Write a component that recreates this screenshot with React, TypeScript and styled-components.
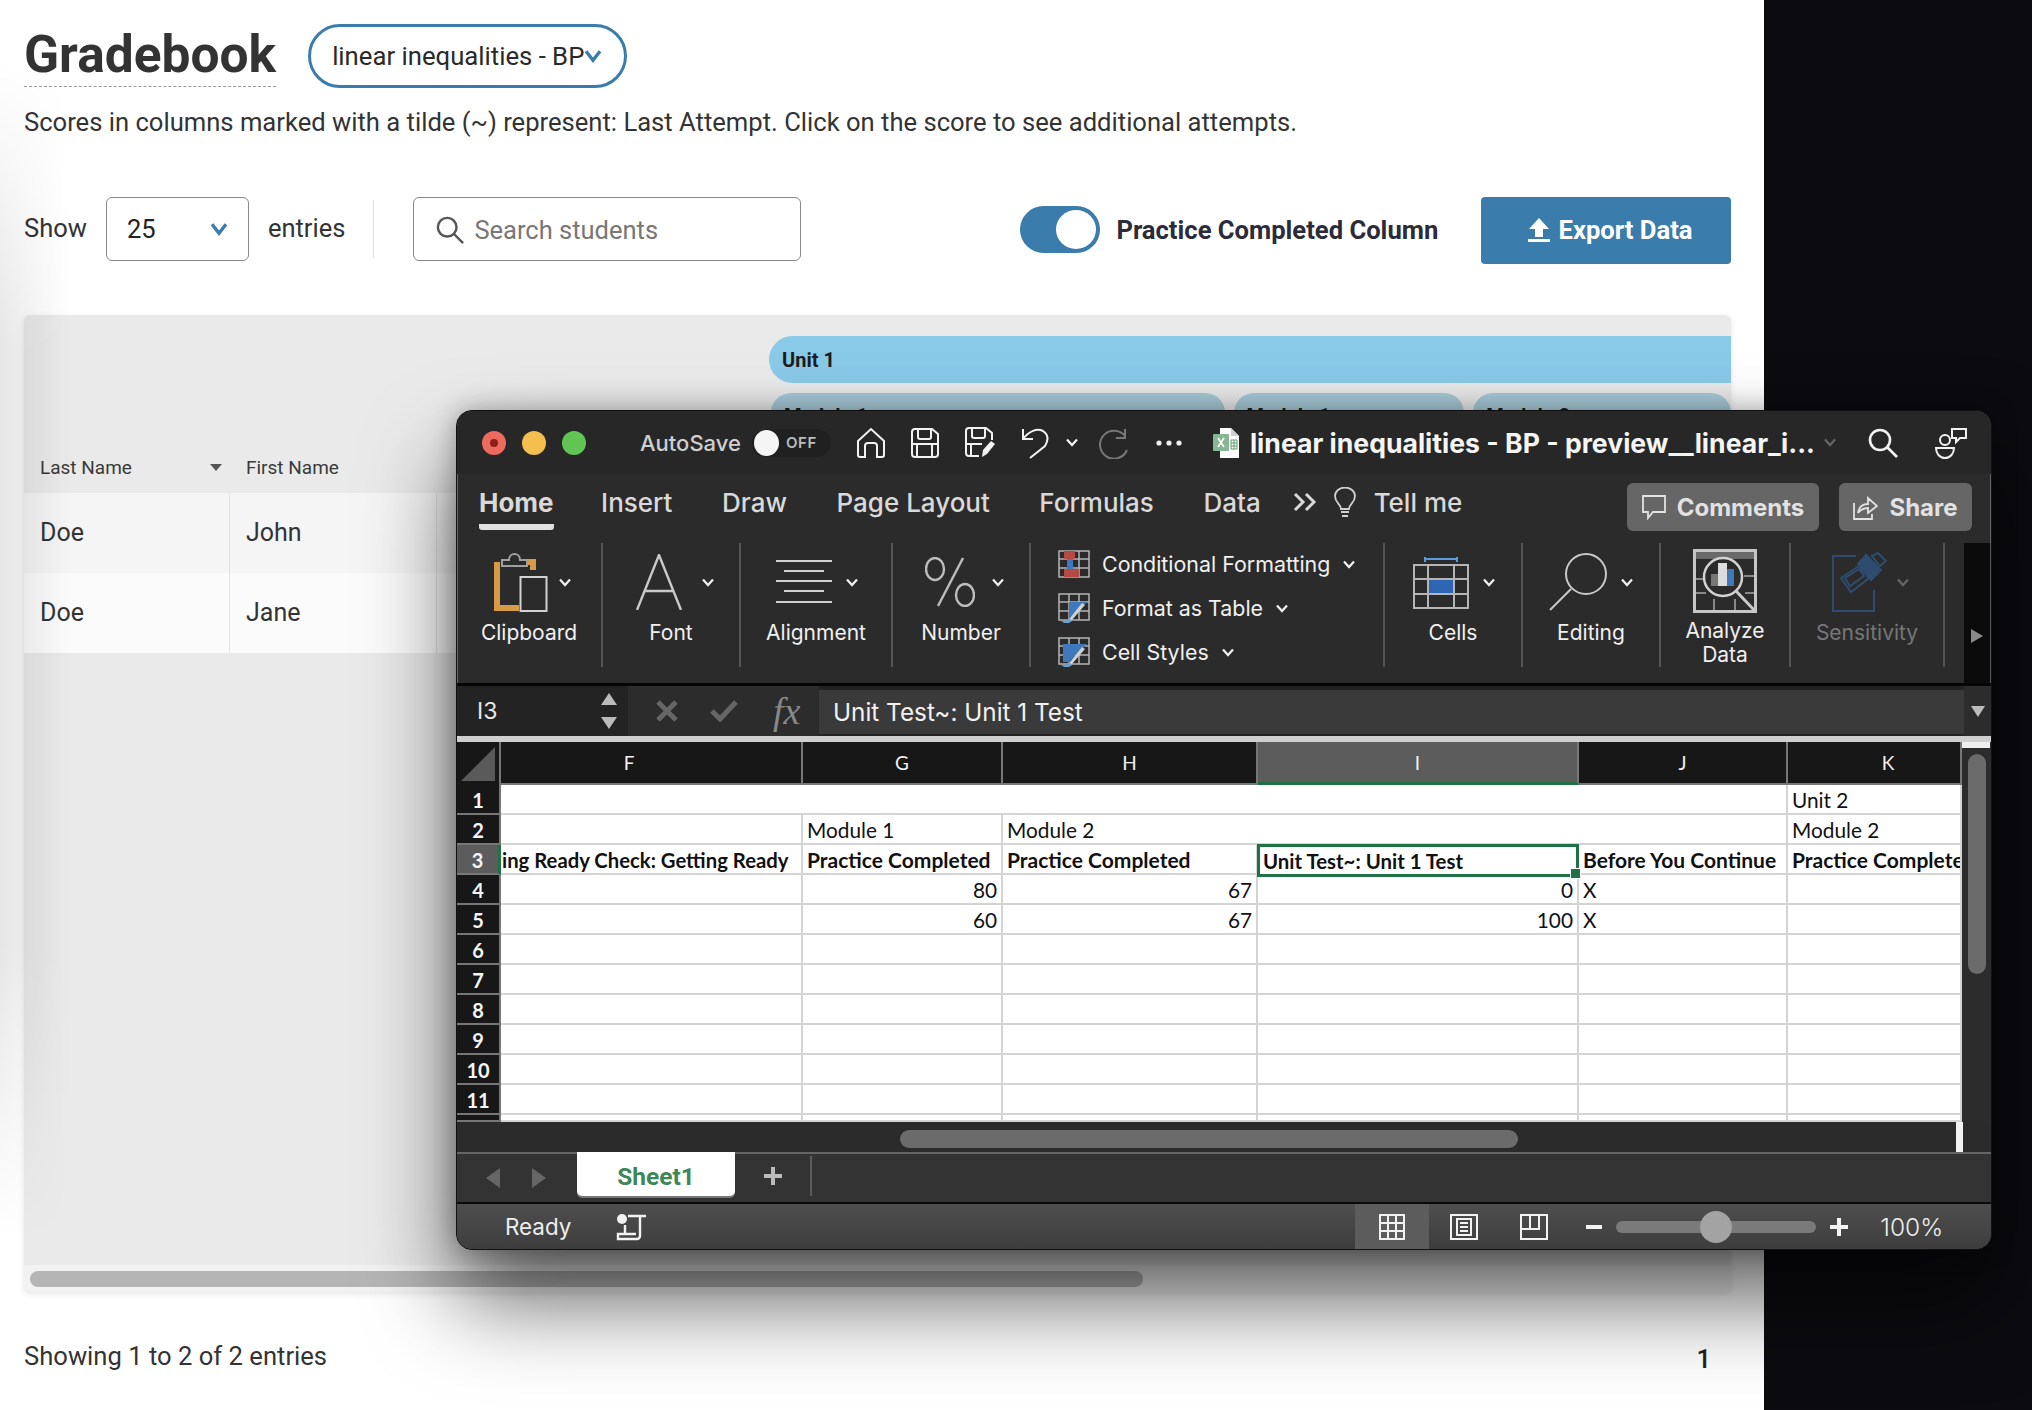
import React from 'react'
import styled, { createGlobalStyle } from 'styled-components'

const GlobalStyle = createGlobalStyle`
  html, body { margin: 0; padding: 0; background: #0c0c10; overflow: hidden; }
  * { box-sizing: border-box; }
`

const Screen = styled.div`
  position: relative;
  width: 2032px;
  height: 1410px;
  display: flex;
  overflow: hidden;
  font-family: Roboto, "Liberation Sans", sans-serif;
`

const Page = styled.div`
  position: relative;
  width: 1764px;
  height: 1410px;
  background: #fff;
  padding: 24px 33px 0 24px;
  display: flex;
  flex-direction: column;
  color: #333;
`

const EdgeShade = styled.div`
  position: absolute;
  left: 0;
  top: 60px;
  width: 70px;
  height: 1180px;
  background: linear-gradient(90deg, rgba(0, 0, 0, 0.1), rgba(0, 0, 0, 0));
  -webkit-mask-image: linear-gradient(180deg, transparent, #000 25%, #000 75%, transparent);
  pointer-events: none;
`

const HeaderRow = styled.div`
  display: flex;
  align-items: flex-start;
  gap: 32px;
`

const Title = styled.h1`
  margin: 0;
  height: 63px;
  padding-top: 3px;
  font-size: 51.5px;
  line-height: 56px;
  font-weight: 700;
  color: #333;
  border-bottom: 1.5px dashed #999;
`

const AssessmentSelect = styled.div`
  width: 319px;
  height: 64px;
  border: 3px solid #3a7cab;
  border-radius: 32px;
  display: flex;
  align-items: center;
  padding-left: 21px;
  font-size: 25.7px;
  color: #2a2a2a;
  white-space: nowrap;
`

const Description = styled.p`
  margin: 17px 0 0;
  font-size: 25.6px;
  line-height: 34px;
  color: #333;
  white-space: nowrap;
`

const Toolbar = styled.div`
  display: flex;
  align-items: center;
  height: 67px;
  padding-bottom: 6px;
  margin-top: 58px;
  font-size: 25.5px;
`

const PageSelect = styled.div`
  width: 143px;
  height: 64px;
  align-self: flex-start;
  margin: 0 19px 0 19px;
  border: 1.5px solid #8a8a8a;
  border-radius: 6px;
  display: flex;
  align-items: center;
  justify-content: space-between;
  padding: 0 20px;
  font-size: 25.5px;
  color: #222;
`

const ToolbarDivider = styled.div`
  width: 1px;
  height: 58px;
  margin: 2px 39px 0 28px;
  background: #ddd;
`

const SearchBox = styled.div`
  width: 388px;
  height: 64px;
  align-self: flex-start;
  border: 1.5px solid #8a8a8a;
  border-radius: 6px;
  display: flex;
  align-items: center;
  gap: 10px;
  padding: 1px 0 0 22px;
  font-size: 25.5px;
  color: #777;
`

const ToggleTrack = styled.div`
  width: 80px;
  height: 47px;
  margin: 4px 0 0 219px;
  border-radius: 24px;
  background: #3a7cab;
  display: flex;
  align-items: center;
  justify-content: flex-end;
  padding-right: 4px;
`

const ToggleKnob = styled.div`
  width: 40px;
  height: 39px;
  border-radius: 50%;
  background: #fff;
`

const ToggleLabel = styled.span`
  margin: 4px 0 0 16px;
  font-size: 25.6px;
  font-weight: 700;
  color: #2b2b3a;
  white-space: nowrap;
`

const ExportButton = styled.div`
  width: 250px;
  height: 67px;
  align-self: flex-start;
  margin-left: auto;
  background: #3a7cab;
  border-radius: 4px;
  display: flex;
  align-items: center;
  justify-content: center;
  gap: 8px;
  padding: 0 0 2px 7px;
  color: #fff;
  font-size: 25.6px;
  font-weight: 700;
`

const Table = styled.div`
  width: 1707px;
  height: 977px;
  margin-top: 51px;
  background: #eaeaea;
  border-radius: 6px;
  box-shadow: 0 2px 6px rgba(0, 0, 0, 0.1);
  display: flex;
  flex-direction: column;
`

const TableHead = styled.div`
  height: 178px;
  padding-top: 21px;
  display: flex;
  flex-direction: column;
  font-size: 19px;
`

const UnitBar = styled.div`
  height: 49px;
  margin-left: 745px;
  padding-left: 13px;
  display: flex;
  align-items: center;
  border-radius: 24px 0 0 24px;
  background: #89cae8;
  font-weight: 700;
  font-size: 20px;
  color: #1d1d1d;
`

const ModuleRow = styled.div`
  display: flex;
  gap: 9px;
  margin: 10px 0 0 747px;
`

const ModuleBar = styled.div<{ $w: number }>`
  width: ${p => p.$w}px;
  height: 50px;
  padding: 11px 0 0 13px;
  border-radius: 20px 20px 0 0;
  background: #a8cad8;
  font-weight: 700;
  font-size: 20px;
  color: #1d1d1d;
`

const HeadLabels = styled.div`
  display: flex;
  margin-top: auto;
  height: 52px;
  color: #3a3a3a;
`

const NameCell = styled.div<{ $w: number }>`
  width: ${p => p.$w}px;
  display: flex;
  align-items: center;
  justify-content: space-between;
  padding: 0 8px 2px 16px;
`

const SortCaret = styled.span`
  width: 0;
  height: 0;
  border-left: 6px solid transparent;
  border-right: 6px solid transparent;
  border-top: 7px solid #555;
`

const StudentRow = styled.div<{ $shade: string }>`
  height: 80px;
  display: flex;
  background: ${p => p.$shade};
  font-size: 25px;
  color: #333;
`

const StudentCell = styled.div<{ $w: number }>`
  width: ${p => p.$w}px;
  display: flex;
  align-items: center;
  padding: 0 0 2px 16px;
  border-right: 1px solid #e2e2e2;
`

const TableScroll = styled.div`
  margin-top: auto;
  height: 27px;
  padding: 6px 0 0 6px;
  background: #f2f2f2;
  border-radius: 0 0 6px 6px;
`

const TableThumb = styled.div`
  width: 1113px;
  height: 16px;
  border-radius: 8px;
  background: #b5b5b5;
`

const Footer = styled.div`
  display: flex;
  justify-content: space-between;
  align-items: center;
  width: 1707px;
  margin-top: 46px;
  font-size: 25.6px;
  color: #333;
`

const PageNumber = styled.span`
  margin-right: 20px;
  padding-top: 6px;
  font-weight: 500;
  color: #222;
`

/* excel window */

const Window = styled.div`
  position: absolute;
  left: 456px;
  top: 410px;
  width: 1536px;
  height: 840px;
  border-radius: 16px;
  border: 1px solid #111;
  box-shadow: inset 0 1px 0 #666, inset 1px 0 0 #666, inset -1px 0 0 #666, inset 0 -2px 0 #666,
    0 50px 90px rgba(0, 0, 0, 0.62), 0 0 26px rgba(0, 0, 0, 0.3);
  background: #2b2b2b;
  display: flex;
  flex-direction: column;
  overflow: hidden;
  font-family: Inter, Roboto, sans-serif;
  color: #ddd;
`

const TitleBar = styled.div`
  height: 63px;
  flex: none;
  display: flex;
  align-items: center;
  background: #272727;
  padding-left: 25px;
`

const Light = styled.div<{ $c: string; $ml: number }>`
  width: 24px;
  height: 24px;
  margin-left: ${p => p.$ml}px;
  border-radius: 50%;
  background: ${p => p.$c};
  display: flex;
  align-items: center;
  justify-content: center;
`

const LightDot = styled.div`
  width: 8px;
  height: 8px;
  border-radius: 50%;
  background: #8c1d18;
`

const AutoSave = styled.span`
  margin-left: 54px;
  font-size: 22px;
  font-weight: 500;
  color: #cfcfcf;
`

const OffSwitch = styled.div`
  width: 79px;
  height: 28px;
  margin-left: 11px;
  border-radius: 14px;
  background: #202020;
  display: flex;
  align-items: center;
  gap: 7px;
  padding-left: 2px;
  font-size: 15px;
  font-weight: 600;
  letter-spacing: 0.6px;
  color: #bbb;
`

const OffKnob = styled.div`
  width: 25px;
  height: 26px;
  border-radius: 50%;
  background: #f5f5f5;
`

const BarIcon = styled.div<{ $ml: number }>`
  display: flex;
  margin-left: ${p => p.$ml}px;
`

const DocTitle = styled.span`
  margin-left: 11px;
  width: 565px;
  font-size: 26.6px;
  font-weight: 700;
  color: #f5f5f5;
  white-space: nowrap;
`

const TabRow = styled.div`
  height: 69px;
  flex: none;
  position: relative;
  display: flex;
  align-items: flex-start;
  padding: 10px 0 0 22px;
`

const Tabs = styled.div`
  display: flex;
  gap: 49.5px;
  font-size: 26px;
  font-weight: 500;
  color: #d9d9d9;
`

const TabLabel = styled.div<{ $on?: boolean }>`
  height: 46px;
  padding-top: 3px;
  margin-right: ${p => (p.$on ? -2 : 0)}px;
  font-weight: ${p => (p.$on ? 700 : 500)};
  border-bottom: ${p => (p.$on ? '6px solid #e0e0e0' : 'none')};
  border-radius: 3px;
  white-space: nowrap;
`

const MoreTabs = styled.div`
  display: flex;
  align-items: center;
  height: 36px;
  margin-left: 32px;
`

const TellMe = styled.span`
  margin-left: 18px;
  padding-top: 3px;
  font-size: 26px;
  font-weight: 500;
  color: #d9d9d9;
`

const TabActions = styled.div`
  margin-left: auto;
  margin-right: 19px;
  margin-top: -1px;
  display: flex;
  gap: 20px;
`

const ActionButton = styled.div<{ $w: number }>`
  width: ${p => p.$w}px;
  height: 48px;
  background: #666;
  border-radius: 6px;
  display: flex;
  align-items: center;
  justify-content: center;
  gap: 11px;
  font-size: 24px;
  font-weight: 700;
  color: #e2e2e2;
`

const Ribbon = styled.div`
  height: 140px;
  flex: none;
  display: flex;
  padding-bottom: 16px;
  position: relative;
`

const RibbonGroup = styled.div<{ $w: number; $dim?: boolean }>`
  width: ${p => p.$w}px;
  height: 124px;
  flex: none;
  border-right: 2px solid #555;
  display: flex;
  flex-direction: column;
  align-items: center;
  color: ${p => (p.$dim ? '#777' : '#f0f0f0')};
  font-size: 21px;
  line-height: 24px;
  text-align: center;
`

const RibbonIcons = styled.div<{ $left: number; $gap?: number }>`
  height: 78px;
  align-self: flex-start;
  display: flex;
  align-items: center;
  gap: ${p => p.$gap || 0}px;
  padding-left: ${p => p.$left}px;
`

const StyleList = styled.div`
  width: 354px;
  height: 124px;
  padding: 7px 0 0 27px;
  border-right: 2px solid #555;
  display: flex;
  flex-direction: column;
  gap: 16px;
  font-size: 21.4px;
  color: #f0f0f0;
`

const StyleItem = styled.div`
  height: 28px;
  display: flex;
  align-items: center;
  white-space: nowrap;
`

const StyleText = styled.span`
  margin: 0 13px 0 12px;
`

const RibbonEnd = styled.div`
  position: absolute;
  right: 0;
  top: 0;
  width: 27px;
  height: 140px;
  background: #0b0b0b;
  display: flex;
  align-items: center;
  justify-content: center;
  padding: 45px 0 0 0;
  border-right: 1px solid #555;
`

const FormulaBar = styled.div`
  height: 59px;
  flex: none;
  display: flex;
  border-top: 3px solid #050505;
  background: #232323;
  border-bottom: 6px solid #cfcfcf;
`

const NameBox = styled.div`
  width: 168px;
  display: flex;
  align-items: center;
  justify-content: space-between;
  padding: 0 8px 0 20px;
  background: #232323;
  font-size: 23px;
  color: #e8e8e8;
`

const Steppers = styled.div`
  display: flex;
  flex-direction: column;
  gap: 12px;
`

const FormulaTools = styled.div`
  width: 191px;
  margin-left: 3px;
  background: #2c2c2c;
  display: flex;
  align-items: center;
  gap: 32px;
  padding-left: 28px;
`

const FxLabel = styled.span`
  margin-left: 3px;
  font-family: "Liberation Serif", serif;
  font-style: italic;
  font-size: 38px;
  line-height: 40px;
  color: #888;
`

const FormulaInput = styled.div`
  width: 1145px;
  margin: 4px 0 2px;
  padding-left: 14px;
  background: #3a3a3a;
  display: flex;
  align-items: center;
  font-size: 24.3px;
  color: #f2f2f2;
`

const FormulaEnd = styled.div`
  flex: 1;
  background: #2c2c2c;
  display: flex;
  align-items: center;
  justify-content: center;
`

const SheetArea = styled.div`
  height: 380px;
  flex: none;
  display: flex;
`

const Sheet = styled.div`
  width: 1505px;
  height: 380px;
  flex: none;
  display: grid;
  grid-template-columns: 44px 302px 200px 255px 321px 209px 174px;
  grid-template-rows: 43px repeat(11, 30px) 7px;
  background: #fff;
  overflow: hidden;
  font-family: Lato, "Open Sans", sans-serif;
  font-size: 20.8px;
  color: #111;
`

const Corner = styled.div`
  background: #171717;
  border-right: 2px solid #777;
  display: flex;
  align-items: flex-end;
  justify-content: flex-end;
  padding: 0 4px 4px 0;
`

const ColHead = styled.div<{ $on?: boolean; $nudge?: number }>`
  background: ${p => (p.$on ? '#5c5c5c' : '#171717')};
  border-right: 2px solid #777;
  border-bottom: ${p => (p.$on ? '3px solid #1f7246' : '2px solid #777')};
  color: #f2f2f2;
  display: flex;
  align-items: center;
  justify-content: center;
  font-size: 19px;
  padding-left: ${p => Math.max(p.$nudge || 0, 0)}px;
  padding-right: ${p => Math.max(-(p.$nudge || 0), 0)}px;
`

const RowHead = styled.div<{ $on?: boolean }>`
  background: ${p => (p.$on ? '#5c5c5c' : '#171717')};
  border-bottom: 2px solid #777;
  border-right: ${p => (p.$on ? '3px solid #1f7246' : '2px solid #777')};
  color: #f5f5f5;
  display: flex;
  align-items: center;
  justify-content: center;
  padding-top: 1px;
  font-size: 20px;
  font-weight: 700;
`

const Cell = styled.div<{ $span?: number; $bold?: boolean; $right?: boolean }>`
  grid-column: span ${p => p.$span || 1};
  border-right: 2px solid #d4d4d4;
  border-bottom: 2px solid #d4d4d4;
  display: flex;
  align-items: center;
  justify-content: ${p => (p.$right ? 'flex-end' : 'flex-start')};
  padding: 1px 4px 0;
  font-size: ${p => (p.$bold ? 21 : 20.8)}px;
  font-weight: ${p => (p.$bold ? 700 : 400)};
  white-space: nowrap;
  overflow: hidden;
`

const ClippedCell = styled(Cell)`
  padding-left: 1px;
  font-size: 20.3px;
`

const ActiveCell = styled.div`
  position: relative;
  z-index: 1;
  border: 3px solid #1f7246;
  margin: -1px 0 -2px -1px;
  display: flex;
  align-items: center;
  padding: 0 3px;
  font-size: 20.4px;
  font-weight: 700;
  white-space: nowrap;

  &::after {
    content: '';
    position: absolute;
    right: -5px;
    bottom: -5px;
    width: 9px;
    height: 9px;
    background: #1f7246;
    border: 1px solid #fff;
  }
`

const VScroll = styled.div`
  flex: 1;
  background: #2c2c2c;
  padding: 12px 5px 0 6px;
  position: relative;

  &::before {
    content: '';
    position: absolute;
    left: 0;
    right: 1px;
    top: 0;
    height: 6px;
    background: #eee;
  }
`

const VThumb = styled.div`
  width: 18px;
  height: 220px;
  border-radius: 9px;
  background: #6b6b6b;
`

const HScroll = styled.div`
  height: 30px;
  flex: none;
  display: flex;
  background: #2b2b2b;
  padding: 8px 0 0 443px;
`

const HThumb = styled.div`
  width: 618px;
  height: 18px;
  border-radius: 9px;
  background: #6b6b6b;
`

const HScrollEnd = styled.div`
  width: 7px;
  height: 30px;
  margin: -8px 0 0 438px;
  background: #f2f2f2;
`

const SheetTabs = styled.div`
  height: 52px;
  flex: none;
  display: flex;
  align-items: flex-start;
  background: #333;
  border-top: 2px solid #666;
  border-bottom: 2px solid #0a0a0a;
`

const SheetArrows = styled.div`
  width: 120px;
  height: 48px;
  display: flex;
  align-items: center;
  gap: 32px;
  padding-left: 29px;
`

const SheetTab = styled.div`
  width: 158px;
  height: 44px;
  margin-top: -2px;
  padding-top: 4px;
  background: #fff;
  border-radius: 0 0 5px 5px;
  box-shadow: 0 2px 0 #777;
  display: flex;
  align-items: center;
  justify-content: center;
  color: #3f8757;
  font-family: Roboto, sans-serif;
  font-size: 24.5px;
  font-weight: 700;
`

const AddSheet = styled.div`
  width: 77px;
  height: 40px;
  margin-top: 2px;
  border-right: 2px solid #5c5c5c;
  display: flex;
  align-items: center;
  justify-content: center;
`

const StatusBar = styled.div`
  flex: 1;
  display: flex;
  align-items: center;
  background: linear-gradient(180deg, #4e4e4e, #3d3d3d);
  padding-left: 48px;
  font-size: 22.4px;
  color: #eee;
`

const ViewButton = styled.div<{ $w: number; $on?: boolean; $ml?: number }>`
  width: ${p => p.$w}px;
  height: 100%;
  margin-left: ${p => p.$ml || 0}px;
  display: flex;
  align-items: center;
  justify-content: center;
  background: ${p => (p.$on ? '#5c5c5c' : 'transparent')};
`

const ZoomTrack = styled.div`
  position: relative;
  width: 200px;
  height: 12px;
  margin: 0 14px;
  border-radius: 6px;
  background: #7a7a7a;
`

const ZoomKnob = styled.div`
  position: absolute;
  left: 84px;
  top: -10px;
  width: 32px;
  height: 32px;
  border-radius: 50%;
  background: #a3a3a3;
`

const ZoomValue = styled.span`
  margin-left: 32px;
  font-size: 24.5px;
  font-weight: 300;
`

const ChevronBlue = ({ size = 18 }: { size?: number }) => (
  <svg width={size} height={size * 0.8} viewBox="0 0 18 14" fill="none" stroke="#3a7cab" strokeWidth="3.4">
    <path d="M2 2l7 9 7-9" />
  </svg>
)

const Chevron = ({ c = '#f0f0f0' }: { c?: string }) => (
  <svg width="12" height="9" viewBox="0 0 12 9" fill="none" stroke={c} strokeWidth="2.2" style={{ flex: 'none' }}>
    <path d="M1 1.5l5 5.5 5-5.5" />
  </svg>
)

const Stroke = styled.svg`
  display: block;
  flex: none;
`

const HomeIcon = () => (
  <Stroke width="30" height="32" viewBox="0 0 30 32" fill="none" stroke="#f2f2f2" strokeWidth="2">
    <path d="M2 14L15 2l13 12v14a2 2 0 0 1-2 2h-5V19a3 3 0 0 0-3-3h-6a3 3 0 0 0-3 3v11H4a2 2 0 0 1-2-2z" />
  </Stroke>
)

const SaveIcon = () => (
  <Stroke width="29" height="30" viewBox="0 0 29 30" fill="none" stroke="#f2f2f2" strokeWidth="2">
    <path d="M5 1h17l6 5v20a3 3 0 0 1-3 3H5a3 3 0 0 1-3-3V4a3 3 0 0 1 3-3z" />
    <path d="M8 1v8a2 2 0 0 0 2 2h9a2 2 0 0 0 2-2V1M2 16h26M7 16v13M22 16v13" />
  </Stroke>
)

const SaveEditIcon = () => (
  <Stroke width="32" height="32" viewBox="0 0 32 32" fill="none" stroke="#f2f2f2" strokeWidth="2">
    <path d="M15 29H5a3 3 0 0 1-3-3V4a3 3 0 0 1 3-3h17l6 5v7" />
    <path d="M8 1v8a2 2 0 0 0 2 2h9a2 2 0 0 0 2-2V1M2 17h16M7 17v12" />
    <path d="M18 30l1-7 8-9 4 3-8 10z" fill="#f2f2f2" stroke="none" />
  </Stroke>
)

const UndoIcon = () => (
  <Stroke width="30" height="32" viewBox="0 0 30 32" fill="none" stroke="#f2f2f2" strokeWidth="2">
    <path d="M2 2v10h10M2 12C8 4 16 1 22 4c6 4 5 10 2 15L9 31" />
  </Stroke>
)

const RedoIcon = () => (
  <Stroke width="34" height="32" viewBox="0 0 34 32" fill="none" stroke="#777" strokeWidth="2">
    <path d="M28 2v9h-9M28 9A14 14 0 1 0 30 23" />
  </Stroke>
)

const DotsIcon = () => (
  <Stroke width="26" height="6" viewBox="0 0 26 6" fill="#eee">
    <circle cx="3" cy="3" r="2.6" />
    <circle cx="13" cy="3" r="2.6" />
    <circle cx="23" cy="3" r="2.6" />
  </Stroke>
)

const ExcelFileIcon = () => (
  <Stroke width="26" height="30" viewBox="0 0 26 30">
    <path d="M7 0h11l8 8v22H7z" fill="#fff" />
    <path d="M18 0l8 8h-8z" fill="#cfcfcf" />
    <rect x="0" y="6" width="16" height="17" rx="1" fill="#86b793" />
    <path d="M5 10l6 9M11 10l-6 9" stroke="#fff" strokeWidth="1.6" />
    <path d="M18 12h6v9h-6zM21 12v9M18 15h6M18 18h6" fill="none" stroke="#5f9a70" strokeWidth="1" />
  </Stroke>
)

const SearchGlass = ({ c = '#f2f2f2', s = 30 }: { c?: string; s?: number }) => (
  <Stroke width={s} height={s} viewBox="0 0 30 30" fill="none" stroke={c} strokeWidth="2.6">
    <circle cx="12" cy="12" r="10" />
    <path d="M19 19l10 10" />
  </Stroke>
)

const CollabIcon = () => (
  <Stroke width="33" height="32" viewBox="0 0 33 32" fill="none" stroke="#f2f2f2" strokeWidth="2">
    <circle cx="10" cy="13" r="5" />
    <path d="M1 21h18c0 6-4 10-9 10s-9-4-9-10z" />
    <path d="M17 2h14v9h-6l-4 4v-4h-4z" />
  </Stroke>
)

const BulbIcon = () => (
  <Stroke width="22" height="30" viewBox="0 0 22 30" fill="none" stroke="#cfcfcf" strokeWidth="1.8">
    <path d="M7 22c0-5-6-6-6-13a10 8.500 0 0 1 20 0c0 7-6 8-6 13z" />
    <path d="M7 25h8M8 29h6" />
  </Stroke>
)

const CommentIcon = () => (
  <Stroke width="24" height="25" viewBox="0 0 24 25" fill="none" stroke="#e2e2e2" strokeWidth="1.8">
    <path d="M1 1h22v16H11l-5 6v-6H1z" />
  </Stroke>
)

const ShareIcon = () => (
  <Stroke width="25" height="26" viewBox="0 0 25 26" fill="none" stroke="#e2e2e2" strokeWidth="1.8">
    <path d="M1 9v16h18v-5M5 19c1-6 5-9 10-9V4l9 8-9 7v-5c-4 0-7 1-10 5z" />
  </Stroke>
)

const ClipboardIcon = () => (
  <Stroke width="54" height="60" viewBox="0 0 54 60" fill="none">
    <path d="M3 10v46h22M34 10h5v8" stroke="#d79a45" strokeWidth="6" />
    <path d="M8 14V8h7c0-8 11-8 11 0h7v6z" stroke="#a0a0a0" strokeWidth="2" fill="#2b2b2b" />
    <rect x="26.500" y="25" width="26" height="34" stroke="#d2d2d2" strokeWidth="2" fill="#2b2b2b" />
  </Stroke>
)

const FontIcon = () => (
  <Stroke width="46" height="56" viewBox="0 0 46 56" fill="none" stroke="#c9c9c9" strokeWidth="2.4">
    <path d="M1 56L23 1l22 55M9 37h28" />
  </Stroke>
)

const AlignIcon = () => (
  <Stroke width="56" height="44" viewBox="0 0 56 44" stroke="#d0d0d0" strokeWidth="2">
    <path d="M0 1h56M8 11h40M0 21h56M8 31h40M0 42h56" />
  </Stroke>
)

const PercentIcon = () => (
  <Stroke width="50" height="50" viewBox="0 0 50 50" fill="none" stroke="#bdbdbd" strokeWidth="2.4">
    <ellipse cx="10" cy="12" rx="9" ry="11" />
    <ellipse cx="40" cy="38" rx="9" ry="11" />
    <path d="M38 1L13 49" />
  </Stroke>
)

const CondFormatIcon = () => (
  <Stroke width="32" height="28" viewBox="0 0 32 28" fill="none">
    <path d="M1 1h30v26H1zM11 1v26M21 1v26M1 9h30M1 18h30" stroke="#b5b5b5" strokeWidth="1.5" />
    <rect x="6" y="1" width="11" height="8" fill="#b54a44" />
    <rect x="6" y="19" width="15" height="8" fill="#b54a44" />
    <rect x="9" y="9" width="6" height="10" fill="#3f78bd" />
  </Stroke>
)

const TableFormatIcon = ({ full }: { full?: boolean }) => (
  <Stroke width="32" height="30" viewBox="0 0 32 30" fill="none">
    <path d="M1 1h30v26H1zM11 1v26M21 1v26M1 9h30M1 18h30" stroke="#b5b5b5" strokeWidth="1.5" />
    <path d={full ? 'M5 7h24L11 25H5z' : 'M11 9h18L12 27h-1z'} fill="#3f78bd" />
    <path d="M4 28c3 1 7 0 8-3l12-15 3 2-13 15c-3 3-8 3-10 1z" fill="#d0d0d0" />
    <path d="M3 28c3 1 6 0 8-3l3 3c-3 3-8 3-11 0z" fill="#64a3dc" />
  </Stroke>
)

const CellsIcon = () => (
  <Stroke width="56" height="54" viewBox="0 0 56 54" fill="none">
    <path d="M12 2v5M44 2v5M12 4h32" stroke="#5a9bdc" strokeWidth="2" />
    <rect x="15" y="24" width="26" height="15" fill="#2f66b3" />
    <path d="M1 10h54v43H1zM15 10v43M41 10v43M1 24h54M1 39h54" stroke="#b5b5b5" strokeWidth="2" />
  </Stroke>
)

const EditIcon = () => (
  <Stroke width="58" height="58" viewBox="0 0 58 58" fill="none" stroke="#c9c9c9" strokeWidth="2">
    <circle cx="37" cy="21" r="20" />
    <path d="M22 36L1 57" />
  </Stroke>
)

const AnalyzeIcon = () => (
  <Stroke width="64" height="64" viewBox="0 0 64 64" fill="none">
    <rect x="1.500" y="1.500" width="61" height="61" stroke="#c6c6c6" strokeWidth="3" />
    <rect x="3" y="3" width="58" height="7" fill="#6a6a6a" />
    <path d="M3 30h10M51 27h10M3 44h10M52 44h9M21 50v11M42 50v11" stroke="#888" strokeWidth="2" />
    <circle cx="30" cy="28" r="19" stroke="#d2d2d2" strokeWidth="2.500" fill="#2b2b2b" />
    <rect x="18" y="25" width="7" height="12" fill="#777" />
    <rect x="25" y="14" width="9" height="23" fill="#dcdcdc" />
    <rect x="34" y="20" width="7" height="17" fill="#3f78bd" />
    <path d="M43 42l19 20" stroke="#c9c9c9" strokeWidth="3" />
  </Stroke>
)

const SensitivityIcon = () => (
  <Stroke width="56" height="60" viewBox="0 0 56 60" fill="none" stroke="#2f4c6e" strokeWidth="2">
    <path d="M24 4H1v55h41V38" />
    <path d="M9 26L27 14l10 12-18 14z" fill="#2b2b2b" />
    <path d="M13 26l14-9 5 7-14 10z" />
    <path d="M26 12l8-9 15 15-10 10z" fill="#2f4c6e" />
    <path d="M40 4l6-3 8 8-6 5z" />
  </Stroke>
)

const Triangle = styled.div<{ $dir: 'up' | 'down' | 'left' | 'right'; $c: string; $s: number; $l?: number }>`
  width: 0;
  height: 0;
  flex: none;
  border-style: solid;
  border-color: transparent;
  border-width: ${p => p.$s}px;
  ${p => (p.$dir === 'up' ? `border-top-width:0;border-bottom-width:${p.$l}px;border-bottom-color:${p.$c};` : '')}
  ${p => (p.$dir === 'down' ? `border-bottom-width:0;border-top-width:${p.$l}px;border-top-color:${p.$c};` : '')}
  ${p => (p.$dir === 'left' ? `border-left-width:0;border-right-width:${p.$l}px;border-right-color:${p.$c};` : '')}
  ${p => (p.$dir === 'right' ? `border-right-width:0;border-left-width:${p.$l}px;border-left-color:${p.$c};` : '')}
`

const Cross = () => (
  <Stroke width="22" height="22" viewBox="0 0 22 22" stroke="#666" strokeWidth="5">
    <path d="M2 2l18 18M20 2L2 20" />
  </Stroke>
)

const Check = () => (
  <Stroke width="28" height="22" viewBox="0 0 28 22" fill="none" stroke="#666" strokeWidth="5">
    <path d="M2 11l8 8L26 2" />
  </Stroke>
)

const MacroIcon = () => (
  <Stroke width="31" height="28" viewBox="0 0 31 28" fill="none" stroke="#f2f2f2" strokeWidth="2.4">
    <circle cx="6" cy="6" r="5" fill="#f2f2f2" stroke="none" />
    <path d="M12 3h18M24 3v20a3 3 0 0 1-3 3H2v-5h18M9 12v9" />
  </Stroke>
)

const NormalViewIcon = () => (
  <Stroke width="26" height="26" viewBox="0 0 26 26" fill="none" stroke="#f2f2f2" strokeWidth="2">
    <path d="M1 1h24v24H1zM9 1v24M17 1v24M1 9h24M1 17h24" />
  </Stroke>
)

const PageViewIcon = () => (
  <Stroke width="28" height="26" viewBox="0 0 28 26" fill="none" stroke="#f2f2f2" strokeWidth="2">
    <path d="M1 1h26v24H1zM7 5h14v16H7zM10 9h8M10 13h8M10 17h8" />
  </Stroke>
)

const BreakViewIcon = () => (
  <Stroke width="28" height="26" viewBox="0 0 28 26" fill="none" stroke="#f2f2f2" strokeWidth="2">
    <path d="M1 1h26v24H1zM1 15h18V1M10 1v14" />
  </Stroke>
)

const Plus = ({ c = '#f2f2f2' }: { c?: string }) => (
  <Stroke width="18" height="18" viewBox="0 0 18 18" stroke={c} strokeWidth="4">
    <path d="M9 0v18M0 9h18" />
  </Stroke>
)

const Minus = () => (
  <Stroke width="16" height="4" viewBox="0 0 16 4" stroke="#f2f2f2" strokeWidth="4">
    <path d="M0 2h16" />
  </Stroke>
)

const columns = ['F', 'G', 'H', 'I', 'J', 'K']
const columnNudge: Record<string, number> = { F: -44, K: 28 }
const emptyRows = [6, 7, 8, 9, 10, 11]

export default function App() {
  return (
    <Screen>
      <GlobalStyle />
      <Page>
        <EdgeShade />
        <HeaderRow>
          <Title>Gradebook</Title>
          <AssessmentSelect>
            linear inequalities - BP
            <ChevronBlue />
          </AssessmentSelect>
        </HeaderRow>
        <Description>
          Scores in columns marked with a tilde (~) represent: Last Attempt. Click on the score to see additional attempts.
        </Description>
        <Toolbar>
          Show
          <PageSelect>
            25
            <ChevronBlue />
          </PageSelect>
          entries
          <ToolbarDivider />
          <SearchBox>
            <SearchGlass c="#555" s={28} />
            Search students
          </SearchBox>
          <ToggleTrack>
            <ToggleKnob />
          </ToggleTrack>
          <ToggleLabel>Practice Completed Column</ToggleLabel>
          <ExportButton>
            <svg width="24" height="26" viewBox="0 0 24 26" fill="#fff">
              <path d="M12 1l10 11h-6v8H8v-8H2zM1 22h22v3H1z" />
            </svg>
            Export Data
          </ExportButton>
        </Toolbar>
        <Table>
          <TableHead>
            <UnitBar>Unit 1</UnitBar>
            <ModuleRow>
              <ModuleBar $w={454}>Module 1</ModuleBar>
              <ModuleBar $w={231}>Module 1</ModuleBar>
              <ModuleBar $w={258}>Module 2</ModuleBar>
            </ModuleRow>
            <HeadLabels>
              <NameCell $w={206}>
                Last Name
                <SortCaret />
              </NameCell>
              <NameCell $w={207}>First Name</NameCell>
            </HeadLabels>
          </TableHead>
          <StudentRow $shade="#f5f5f5">
            <StudentCell $w={206}>Doe</StudentCell>
            <StudentCell $w={207}>John</StudentCell>
          </StudentRow>
          <StudentRow $shade="#fbfbfb">
            <StudentCell $w={206}>Doe</StudentCell>
            <StudentCell $w={207}>Jane</StudentCell>
          </StudentRow>
          <TableScroll>
            <TableThumb />
          </TableScroll>
        </Table>
        <Footer>
          Showing 1 to 2 of 2 entries
          <PageNumber>1</PageNumber>
        </Footer>
      </Page>

      <Window>
        <TitleBar>
          <Light $c="#ed6a5e" $ml={0}>
            <LightDot />
          </Light>
          <Light $c="#f4bf4f" $ml={16} />
          <Light $c="#61c554" $ml={16} />
          <AutoSave>AutoSave</AutoSave>
          <OffSwitch>
            <OffKnob />
            OFF
          </OffSwitch>
          <BarIcon $ml={25}><HomeIcon /></BarIcon>
          <BarIcon $ml={24}><SaveIcon /></BarIcon>
          <BarIcon $ml={25}><SaveEditIcon /></BarIcon>
          <BarIcon $ml={25}><UndoIcon /></BarIcon>
          <BarIcon $ml={15}><Chevron /></BarIcon>
          <BarIcon $ml={19}><RedoIcon /></BarIcon>
          <BarIcon $ml={25}><DotsIcon /></BarIcon>
          <BarIcon $ml={31}><ExcelFileIcon /></BarIcon>
          <DocTitle>linear inequalities - BP - preview__linear_i...</DocTitle>
          <BarIcon $ml={9}><Chevron c="#666" /></BarIcon>
          <BarIcon $ml={32}><SearchGlass /></BarIcon>
          <BarIcon $ml={37}><CollabIcon /></BarIcon>
        </TitleBar>
        <TabRow>
          <Tabs>
            <TabLabel $on>Home</TabLabel>
            <TabLabel>Insert</TabLabel>
            <TabLabel>Draw</TabLabel>
            <TabLabel>Page Layout</TabLabel>
            <TabLabel>Formulas</TabLabel>
            <TabLabel>Data</TabLabel>
          </Tabs>
          <MoreTabs>
            <svg width="24" height="20" viewBox="0 0 24 20" fill="none" stroke="#d9d9d9" strokeWidth="3">
              <path d="M2 2l8 8-8 8M13 2l8 8-8 8" />
            </svg>
            <BarIcon $ml={17}><BulbIcon /></BarIcon>
          </MoreTabs>
          <TellMe>Tell me</TellMe>
          <TabActions>
            <ActionButton $w={192}>
              <CommentIcon />
              Comments
            </ActionButton>
            <ActionButton $w={133}>
              <ShareIcon />
              Share
            </ActionButton>
          </TabActions>
        </TabRow>
        <Ribbon>
          <RibbonGroup $w={146}>
            <RibbonIcons $left={37} $gap={11}>
              <ClipboardIcon />
              <Chevron />
            </RibbonIcons>
            Clipboard
          </RibbonGroup>
          <RibbonGroup $w={138}>
            <RibbonIcons $left={33} $gap={20}>
              <FontIcon />
              <Chevron />
            </RibbonIcons>
            Font
          </RibbonGroup>
          <RibbonGroup $w={152}>
            <RibbonIcons $left={35} $gap={14}>
              <AlignIcon />
              <Chevron />
            </RibbonIcons>
            Alignment
          </RibbonGroup>
          <RibbonGroup $w={138}>
            <RibbonIcons $left={32} $gap={17}>
              <PercentIcon />
              <Chevron />
            </RibbonIcons>
            Number
          </RibbonGroup>
          <StyleList>
            <StyleItem>
              <CondFormatIcon />
              <StyleText>Conditional Formatting</StyleText>
              <Chevron />
            </StyleItem>
            <StyleItem>
              <TableFormatIcon />
              <StyleText>Format as Table</StyleText>
              <Chevron />
            </StyleItem>
            <StyleItem>
              <TableFormatIcon full />
              <StyleText>Cell Styles</StyleText>
              <Chevron />
            </StyleItem>
          </StyleList>
          <RibbonGroup $w={138}>
            <RibbonIcons $left={28} $gap={14}>
              <CellsIcon />
              <Chevron />
            </RibbonIcons>
            Cells
          </RibbonGroup>
          <RibbonGroup $w={138}>
            <RibbonIcons $left={26} $gap={14}>
              <EditIcon />
              <Chevron />
            </RibbonIcons>
            Editing
          </RibbonGroup>
          <RibbonGroup $w={130}>
            <RibbonIcons $left={32}>
              <AnalyzeIcon />
            </RibbonIcons>
            Analyze
            <br />
            Data
          </RibbonGroup>
          <RibbonGroup $w={154} $dim>
            <RibbonIcons $left={41} $gap={9}>
              <SensitivityIcon />
              <Chevron c="#666" />
            </RibbonIcons>
            Sensitivity
          </RibbonGroup>
          <RibbonEnd>
            <Triangle $dir="right" $c="#8a8a8a" $s={7} $l={12} />
          </RibbonEnd>
        </Ribbon>
        <FormulaBar>
          <NameBox>
            I3
            <Steppers>
              <Triangle $dir="up" $c="#bbb" $s={8} $l={12} />
              <Triangle $dir="down" $c="#bbb" $s={8} $l={12} />
            </Steppers>
          </NameBox>
          <FormulaTools>
            <Cross />
            <Check />
            <FxLabel>fx</FxLabel>
          </FormulaTools>
          <FormulaInput>Unit Test~: Unit 1 Test</FormulaInput>
          <FormulaEnd>
            <Triangle $dir="down" $c="#bbb" $s={7} $l={11} />
          </FormulaEnd>
        </FormulaBar>
        <SheetArea>
          <Sheet>
            <Corner>
              <svg width="34" height="34" viewBox="0 0 34 34" fill="#5a5a5a">
                <path d="M34 0v34H0z" />
              </svg>
            </Corner>
            {columns.map(name => (
              <ColHead key={name} $on={name === 'I'} $nudge={columnNudge[name]}>{name}</ColHead>
            ))}

            <RowHead>1</RowHead>
            <Cell $span={5} />
            <Cell>Unit 2</Cell>

            <RowHead>2</RowHead>
            <Cell />
            <Cell>Module 1</Cell>
            <Cell $span={3}>Module 2</Cell>
            <Cell>Module 2</Cell>

            <RowHead $on>3</RowHead>
            <ClippedCell $bold>ing Ready Check: Getting Ready</ClippedCell>
            <Cell $bold>Practice Completed</Cell>
            <Cell $bold>Practice Completed</Cell>
            <ActiveCell>Unit Test~: Unit 1 Test</ActiveCell>
            <Cell $bold>Before You Continue</Cell>
            <Cell $bold>Practice Completed</Cell>

            <RowHead>4</RowHead>
            <Cell />
            <Cell $right>80</Cell>
            <Cell $right>67</Cell>
            <Cell $right>0</Cell>
            <Cell>X</Cell>
            <Cell />

            <RowHead>5</RowHead>
            <Cell />
            <Cell $right>60</Cell>
            <Cell $right>67</Cell>
            <Cell $right>100</Cell>
            <Cell>X</Cell>
            <Cell />

            {emptyRows.map(row => (
              <React.Fragment key={row}>
                <RowHead>{row}</RowHead>
                {columns.map(name => (
                  <Cell key={name} />
                ))}
              </React.Fragment>
            ))}

            <RowHead />
            {columns.map(name => (
              <Cell key={name} />
            ))}
          </Sheet>
          <VScroll>
            <VThumb />
          </VScroll>
        </SheetArea>
        <HScroll>
          <HThumb />
          <HScrollEnd />
        </HScroll>
        <SheetTabs>
          <SheetArrows>
            <Triangle $dir="left" $c="#666" $s={10} $l={14} />
            <Triangle $dir="right" $c="#666" $s={10} $l={14} />
          </SheetArrows>
          <SheetTab>Sheet1</SheetTab>
          <AddSheet>
            <Plus c="#bbb" />
          </AddSheet>
        </SheetTabs>
        <StatusBar>
          Ready
          <BarIcon $ml={45}><MacroIcon /></BarIcon>
          <ViewButton $w={74} $on $ml={708}><NormalViewIcon /></ViewButton>
          <ViewButton $w={70}><PageViewIcon /></ViewButton>
          <ViewButton $w={70}><BreakViewIcon /></ViewButton>
          <BarIcon $ml={17}><Minus /></BarIcon>
          <ZoomTrack>
            <ZoomKnob />
          </ZoomTrack>
          <Plus />
          <ZoomValue>100%</ZoomValue>
        </StatusBar>
      </Window>
    </Screen>
  )
}
